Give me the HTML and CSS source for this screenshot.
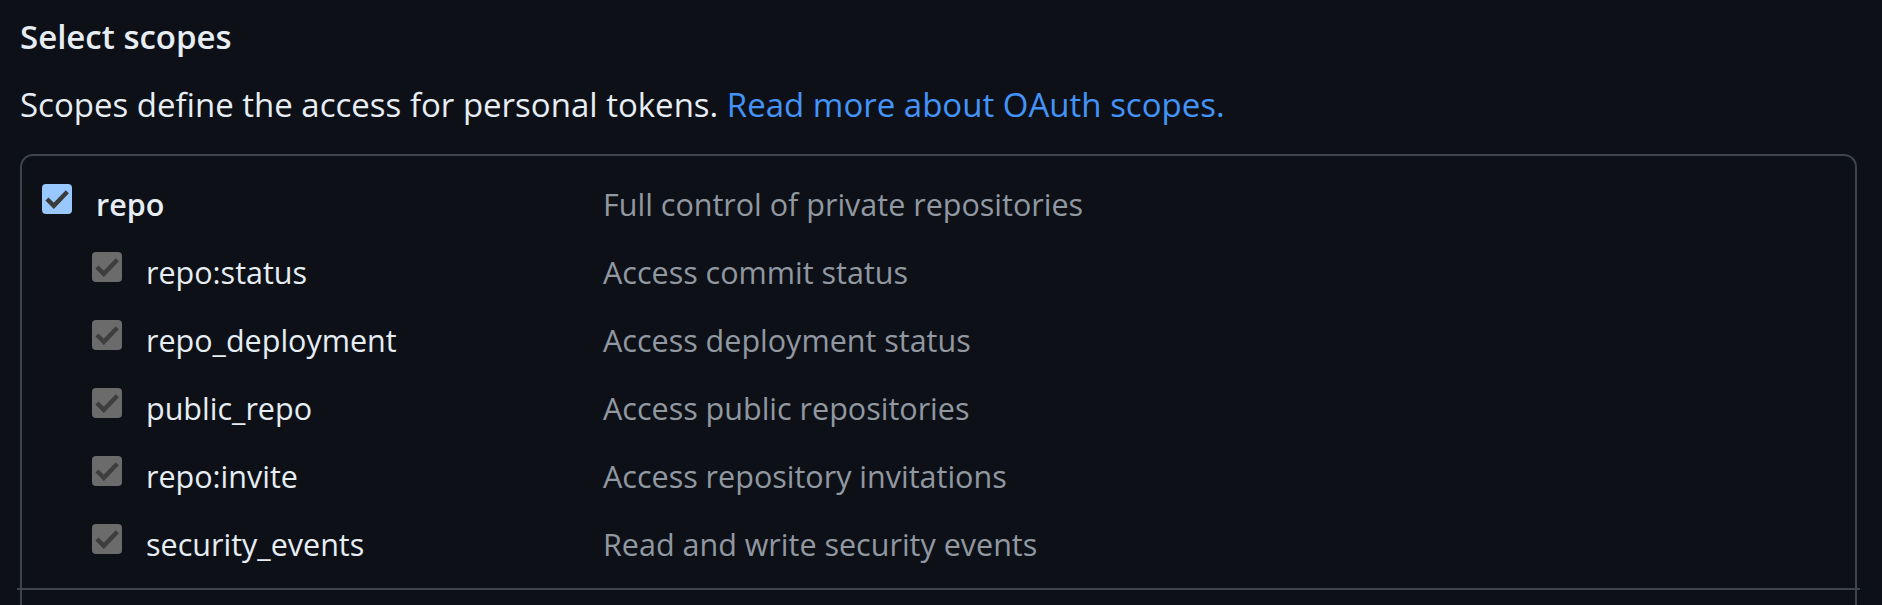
FILE: index.html
```html
<!DOCTYPE html>
<html lang="en">
<head>
<meta charset="utf-8">
<title>Select scopes</title>
<link rel="stylesheet" href="styles.css">
</head>
<body>
<main class="page">
  <h3 class="title">Select scopes</h3>
  <p class="note">Scopes define the access for personal tokens. <a class="link" href="#">Read more about OAuth scopes.</a></p>
  <div class="scopes">
    <div class="scope">
      <div class="scope-name">
        <span class="check check-on"><svg viewBox="0 0 30 30" width="30" height="30"><path d="M6.5 16.5 L11.8 21.8 L23.8 9.3" /></svg></span>
        <span class="label label-strong">repo</span>
      </div>
      <div class="desc">Full control of private repositories</div>
    </div>
    <div class="scope scope-child">
      <div class="scope-name">
        <span class="check check-dis"><svg viewBox="0 0 30 30" width="30" height="30"><path d="M6.5 16.5 L11.8 21.8 L23.8 9.3" /></svg></span>
        <span class="label">repo:status</span>
      </div>
      <div class="desc">Access commit status</div>
    </div>
    <div class="scope scope-child">
      <div class="scope-name">
        <span class="check check-dis"><svg viewBox="0 0 30 30" width="30" height="30"><path d="M6.5 16.5 L11.8 21.8 L23.8 9.3" /></svg></span>
        <span class="label">repo_deployment</span>
      </div>
      <div class="desc">Access deployment status</div>
    </div>
    <div class="scope scope-child">
      <div class="scope-name">
        <span class="check check-dis"><svg viewBox="0 0 30 30" width="30" height="30"><path d="M6.5 16.5 L11.8 21.8 L23.8 9.3" /></svg></span>
        <span class="label">public_repo</span>
      </div>
      <div class="desc">Access public repositories</div>
    </div>
    <div class="scope scope-child">
      <div class="scope-name">
        <span class="check check-dis"><svg viewBox="0 0 30 30" width="30" height="30"><path d="M6.5 16.5 L11.8 21.8 L23.8 9.3" /></svg></span>
        <span class="label">repo:invite</span>
      </div>
      <div class="desc">Access repository invitations</div>
    </div>
    <div class="scope scope-child">
      <div class="scope-name">
        <span class="check check-dis"><svg viewBox="0 0 30 30" width="30" height="30"><path d="M6.5 16.5 L11.8 21.8 L23.8 9.3" /></svg></span>
        <span class="label">security_events</span>
      </div>
      <div class="desc">Read and write security events</div>
    </div>
    <div class="divider"></div>
    <div class="more"></div>
  </div>
</main>
</body>
</html>
```

FILE: styles.css
```css
html, body {
  margin: 0;
  padding: 0;
  background: #0d1117;
  overflow: hidden;
}

.page {
  padding: 12px 25px 0 20px;
  font-family: "Open Sans", "Liberation Sans", sans-serif;
  font-size: 33px;
  line-height: 49.5px;
  color: #e6edf3;
}

.title {
  margin: 0;
  font-size: 33px;
  font-weight: 600;
  line-height: 49.5px;
}

.note {
  margin: 18px 0 25px 0;
}

.link {
  color: #4493f8;
  text-decoration: none;
}

.scopes {
  border: 2px solid #3d444d;
  border-bottom: none;
  border-radius: 13px 13px 0 0;
  padding: 14px 0 0 0;
}

.scope {
  display: grid;
  grid-template-columns: 561px 1fr;
  height: 68px;
  align-items: center;
  padding-left: 20px;
  font-size: 30.5px;
  line-height: 68px;
}

.scope-name {
  display: flex;
  align-items: center;
  gap: 24px;
}

.scope-child .scope-name {
  padding-left: 50px;
}

.check {
  display: block;
  width: 30px;
  height: 30px;
  border-radius: 4px;
  margin-bottom: 10px;
  flex: none;
}

.check svg {
  display: block;
  fill: none;
  stroke-width: 4.4;
  stroke-linecap: square;
  stroke-linejoin: miter;
}

.check-on {
  background: #99c8ff;
}

.check-on svg {
  stroke: #3b3b3b;
}

.check-dis {
  background: #6b6b6b;
}

.check-dis svg {
  stroke: #3e3e3e;
}

.label {
  color: #e6edf3;
}

.label-strong {
  font-weight: 600;
}

.desc {
  color: #9198a1;
}

.divider {
  height: 2px;
  background: #3d444d;
  margin: 10px -5px 0 -5px;
}

.more {
  height: 60px;
}
```
